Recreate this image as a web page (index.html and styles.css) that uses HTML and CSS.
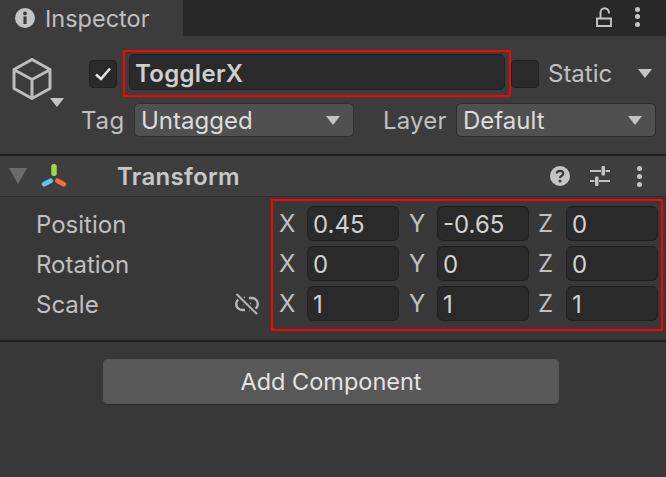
FILE: index.html
```html
<!DOCTYPE html>
<html lang="en">
<head>
    <meta charset="UTF-8">
    <title>Inspector</title>
    <link rel="stylesheet" href="styles.css">
</head>
<body>
    <div class="inspector">
        <div class="tabbar">
            <div class="tab">
                <svg class="tab-icon" viewBox="0 0 20 20"><circle cx="10" cy="10" r="10" fill="#c4c4c4"/><rect x="8.400" y="8.400" width="3.200" height="7.600" fill="#3c3c3c"/><circle cx="10" cy="5.400" r="1.900" fill="#3c3c3c"/></svg>
                <span>Inspector</span>
            </div>
            <div class="tabbar-tools">
                <svg class="lock" viewBox="0 0 16 20"><path d="M1 11.500h14v7.500H1zM4.500 11V5.500a4.200 4.200 0 0 1 8.400 0v1" fill="none" stroke="#c4c4c4" stroke-width="1.900"/></svg>
                <div class="dots"><i></i><i></i><i></i></div>
            </div>
        </div>

        <div class="object-header">
            <div class="object-icon">
                <svg class="cube" viewBox="0 0 40 42"><path d="M20 1.500 38 11.500V30.500L20 40.500 2 30.500V11.500ZM2.500 12 20 21.500 37.500 12M20 21.500V40" fill="none" stroke="#bdbdbd" stroke-width="3" stroke-linejoin="round"/></svg>
                <div class="arrow arrow-cube"></div>
            </div>
            <div class="object-fields">
                <div class="name-row">
                    <div class="check"><svg viewBox="0 0 18 16"><path d="M2 8.500 7 13 16 2.500" fill="none" stroke="#e4e4e4" stroke-width="2.600"/></svg></div>
                    <div class="highlight name-box">
                        <div class="name-input">TogglerX</div>
                    </div>
                    <div class="check"></div>
                    <span class="static-label">Static</span>
                    <div class="arrow arrow-static"></div>
                </div>
                <div class="tag-row">
                    <span class="tag-label">Tag</span>
                    <div class="dropdown dropdown-tag"><span>Untagged</span><div class="arrow"></div></div>
                    <span class="layer-label">Layer</span>
                    <div class="dropdown dropdown-layer"><span>Default</span><div class="arrow"></div></div>
                </div>
            </div>
        </div>

        <div class="component-header">
            <div class="arrow arrow-fold"></div>
            <svg class="transform-icon" viewBox="0 0 26 24">
                <rect x="10.250" y="0" width="5.500" height="12" rx="2.500" fill="#a4d64a"/>
                <rect x="0.400" y="16" width="12" height="5" rx="2.500" fill="#5ec3f5" transform="rotate(-28 6.400 18.500)"/>
                <rect x="13.600" y="16" width="12" height="5" rx="2.500" fill="#f26b3a" transform="rotate(28 19.600 18.500)"/>
            </svg>
            <span class="component-title">Transform</span>
            <div class="component-tools">
                <svg class="help" viewBox="0 0 20 20"><circle cx="10" cy="10" r="10" fill="#c4c4c4"/><path d="M6.800 7.600C6.800 5.800 8.200 4.800 10 4.800c1.900 0 3.300 1 3.300 2.700 0 2.300-3.300 2.200-3.300 4.500" fill="none" stroke="#3e3e3e" stroke-width="2.200"/><circle cx="10" cy="15" r="1.500" fill="#3e3e3e"/></svg>
                <svg class="sliders" viewBox="0 0 20 20"><path d="M0 5h11M15.500 5H20M0 15h4.500M9 15h11" stroke="#c4c4c4" stroke-width="2" fill="none"/><rect x="11.500" y="0" width="3.500" height="9.500" rx="1" fill="#c4c4c4"/><rect x="5" y="10.500" width="3.500" height="9.500" rx="1" fill="#c4c4c4"/></svg>
                <div class="dots"><i></i><i></i><i></i></div>
            </div>
        </div>

        <div class="component-body">
            <div class="labels">
                <div class="prop-label">Position</div>
                <div class="prop-label">Rotation</div>
                <div class="prop-label prop-scale">
                    <span>Scale</span>
                    <svg class="link" viewBox="0 0 26 20">
                        <path d="M10 3H7.200a6 6 0 0 0 0 12H10M14 15h2.800a6 6 0 0 0 0-12H14M8 9h8" fill="none" stroke="#b8b8b8" stroke-width="2.400"/>
                        <path d="M1.500 -1 22 19" stroke="#383838" stroke-width="5.500"/>
                        <path d="M1.500 -1 22 19" stroke="#b8b8b8" stroke-width="2"/>
                    </svg>
                </div>
            </div>
            <div class="highlight vectors">
                <div class="vector-row">
                    <span class="axis axis-x">X</span><div class="num">0.45</div>
                    <span class="axis axis-y">Y</span><div class="num">-0.65</div>
                    <span class="axis axis-z">Z</span><div class="num">0</div>
                </div>
                <div class="vector-row">
                    <span class="axis axis-x">X</span><div class="num">0</div>
                    <span class="axis axis-y">Y</span><div class="num">0</div>
                    <span class="axis axis-z">Z</span><div class="num">0</div>
                </div>
                <div class="vector-row">
                    <span class="axis axis-x">X</span><div class="num">1</div>
                    <span class="axis axis-y">Y</span><div class="num">1</div>
                    <span class="axis axis-z">Z</span><div class="num">1</div>
                </div>
            </div>
        </div>

        <div class="footer">
            <button class="add-button">Add Component</button>
        </div>
    </div>
</body>
</html>
```

FILE: styles.css
```css
* {
    box-sizing: border-box;
}
body {
    margin: 0;
    background: #383838;
    font-family: Inter, "Noto Sans", sans-serif;
    font-size: 24px;
    color: #c0c0c0;
}
.inspector {
    width: 666px;
    height: 477px;
    overflow: hidden;
    display: flex;
    flex-direction: column;
}

/* tab bar */
.tabbar {
    height: 36px;
    flex: none;
    display: flex;
    background: #282828;
}
.tab {
    width: 183px;
    display: flex;
    align-items: center;
    padding-left: 15px;
    gap: 10px;
    background: #3c3c3c;
    font-size: 23.500px;
}
.tab-icon {
    width: 20px;
    height: 20px;
}
.tabbar-tools {
    flex: 1;
    display: flex;
    justify-content: flex-end;
    align-items: center;
    gap: 23px;
    padding: 0 25px 3px 0;
}
.tabbar-tools .dots {
    gap: 2.500px;
}
.lock {
    width: 16px;
    height: 20px;
}
.dots {
    width: 6px;
    display: flex;
    flex-direction: column;
    gap: 3px;
}
.dots i {
    display: block;
    width: 5px;
    height: 5px;
    border-radius: 50%;
    background: #c4c4c4;
}

.arrow {
    width: 0;
    height: 0;
    border-left: 7px solid transparent;
    border-right: 7px solid transparent;
    border-top: 9px solid #c4c4c4;
}

/* game object header */
.object-header {
    height: 120px;
    flex: none;
    display: flex;
    padding-top: 14px;
    background: #3c3c3c;
    border-bottom: 2px solid #1f1f1f;
}
.object-icon {
    width: 82px;
    padding: 8px 0 0 12px;
}
.cube {
    display: block;
    width: 40px;
    height: 42px;
}
.arrow-cube {
    margin: -2px 0 0 38px;
}
.name-row {
    display: flex;
    align-items: center;
    padding-left: 7px;
}
.check {
    width: 28px;
    height: 28px;
    flex: none;
    display: flex;
    align-items: center;
    justify-content: center;
    background: #2a2a2a;
    border: 1px solid #212121;
    border-radius: 4px;
}
.check svg {
    width: 18px;
    height: 16px;
}
.highlight {
    border: 2px solid #ff0000;
}
.name-box {
    width: 388px;
    height: 47px;
    margin-left: 6px;
    padding: 2px 4px;
}
.name-input {
    height: 36px;
    padding-left: 5px;
    line-height: 37px;
    font-weight: 600;
    letter-spacing: 0.300px;
    color: #cfcfcf;
    background: #2a2a2a;
    border: 1px solid #212121;
    border-radius: 5px;
}
.static-label {
    margin-left: 9px;
    width: 90px;
}
.tag-row {
    display: flex;
    align-items: center;
    margin-top: 6px;
}
.tag-label {
    width: 53px;
    margin-left: -1px;
    letter-spacing: 0.700px;
}
.layer-label {
    width: 73px;
    margin-left: 29px;
    letter-spacing: 0.200px;
}
.dropdown {
    height: 34px;
    display: flex;
    align-items: center;
    justify-content: space-between;
    padding: 0 13px 0 6px;
    background: #505050;
    border: 1px solid #2f2f2f;
    border-radius: 5px;
    color: #dcdcdc;
}
.dropdown-tag {
    width: 220px;
}
.dropdown-layer {
    width: 200px;
}

/* transform */
.component-header {
    height: 41px;
    flex: none;
    display: flex;
    align-items: center;
    padding-left: 9px;
    background: #3e3e3e;
    border-bottom: 1px solid #2e2e2e;
}
.arrow-fold {
    border-left-width: 9px;
    border-right-width: 9px;
    border-top: 16px solid #6b6b6b;
}
.transform-icon {
    width: 26px;
    height: 24px;
    margin-left: 14px;
}
.component-title {
    margin-left: 50px;
    font-weight: 600;
    letter-spacing: 0.300px;
    color: #c8c8c8;
}
.component-tools {
    margin-left: auto;
    padding-right: 23px;
    display: flex;
    align-items: center;
    gap: 20px;
}
.help, .sliders {
    width: 20px;
    height: 20px;
}
.component-tools .dots {
    margin-left: 7px;
}
.component-body {
    height: 145px;
    flex: none;
    display: flex;
    padding-top: 2px;
    border-bottom: 2px solid #1f1f1f;
}
.labels {
    width: 271px;
    padding: 8px 0 0 36px;
}
.prop-label {
    height: 35px;
    margin-bottom: 5px;
    line-height: 35px;
}
.prop-scale {
    display: flex;
    align-items: center;
    justify-content: space-between;
    padding-right: 10px;
}
.link {
    width: 26px;
    height: 20px;
    overflow: visible;
}
.vectors {
    width: 392px;
    height: 132px;
    padding-top: 5px;
}
.vector-row {
    display: flex;
    height: 35px;
    margin-bottom: 5px;
    align-items: center;
}
.axis {
    flex: none;
    text-align: left;
}
.axis-x {
    width: 34px;
    padding-left: 6px;
}
.axis-y {
    width: 38px;
    padding-left: 10px;
}
.axis-z {
    width: 37px;
    padding-left: 9px;
}
.num {
    height: 35px;
    width: 92px;
    padding-left: 5px;
    line-height: 36px;
    color: #d2d2d2;
    background: #2a2a2a;
    border: 1px solid #212121;
    border-top-color: #1c1c1c;
    border-radius: 6px;
}

.footer {
    flex: 1;
    padding: 17px 0 0 103px;
}
.add-button {
    display: block;
    width: 456px;
    height: 46px;
    font-family: inherit;
    font-size: 23.500px;
    color: #e4e4e4;
    background: #585858;
    border: none;
    border-bottom: 1px solid #2b2b2b;
    border-radius: 5px;
}
```
